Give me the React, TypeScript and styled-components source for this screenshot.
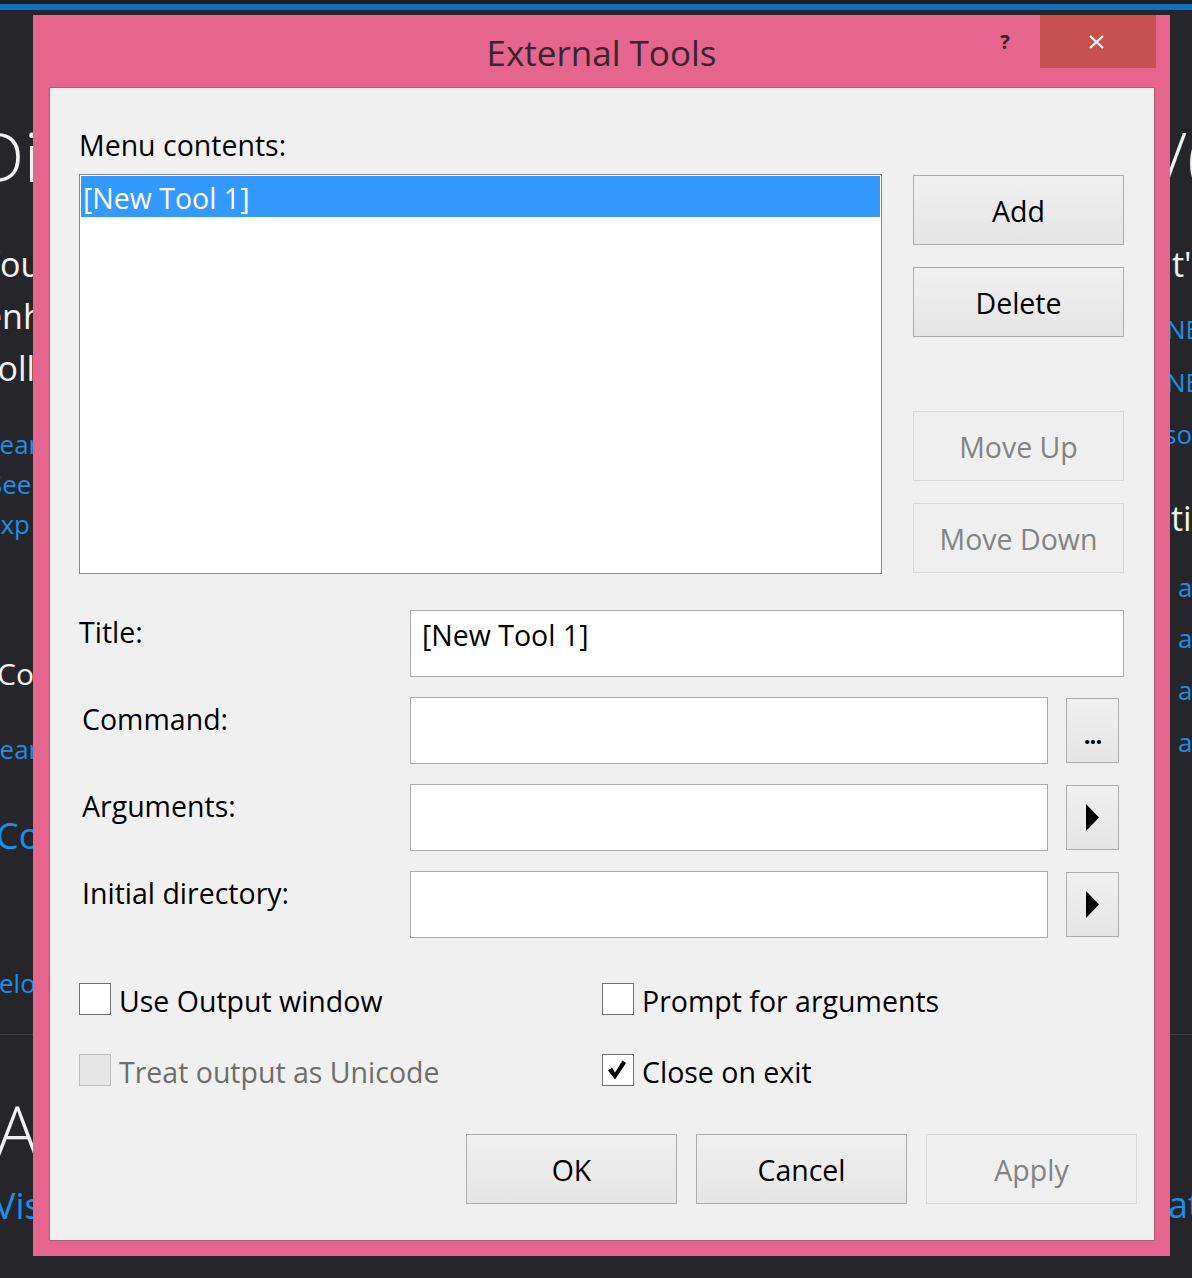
import React from 'react';
import styled, { createGlobalStyle } from 'styled-components';

const FONT = `"Open Sans", "Noto Sans", "DejaVu Sans", sans-serif`;

const Global = createGlobalStyle`
  html, body { margin: 0; padding: 0; background: #26262a; }
  body { font-family: ${FONT}; overflow: hidden; }
  * { box-sizing: border-box; }
`;

/* ---------- background start page ---------- */

const Page = styled.div`
  position: relative;
  width: 1192px;
  height: 1278px;
  overflow: hidden;
  background: #26262a;
  display: flex;
  flex-direction: column;
`;

const TopStrip = styled.div`
  height: 10px;
  background: #1f1f22;
  border-bottom: 6px solid #0e72c3;
  flex: none;
`;

const Section = styled.div<{ $height?: number }>`
  display: grid;
  grid-template-columns: 1170px 1fr;
  height: ${(p) => (p.$height ? `${p.$height}px` : 'auto')};
  flex: none;
`;

const Column = styled.div`
  display: flex;
  flex-direction: column;
  overflow: hidden;
  white-space: nowrap;
`;

const Fragment = styled.div<{
  $size: number;
  $gap: number;
  $indent?: number;
  $link?: boolean;
  $light?: boolean;
}>`
  font-family: ${FONT};
  font-size: ${(p) => p.$size}px;
  line-height: ${(p) => p.$size}px;
  height: ${(p) => p.$size}px;
  margin-top: ${(p) => p.$gap}px;
  margin-left: ${(p) => p.$indent ?? 0}px;
  color: ${(p) => (p.$link ? '#1b8fe8' : '#f1f1f1')};
  font-weight: ${(p) => (p.$light ? 300 : 400)};
`;

const Rule = styled.div`
  height: 1px;
  background: #3f3f46;
  flex: none;
`;

/* ---------- dialog window ---------- */

const Window = styled.div`
  position: absolute;
  left: 33px;
  top: 15px;
  width: 1137px;
  height: 1241px;
  background: #e5658f;
  display: flex;
  flex-direction: column;
  font-family: ${FONT};
`;

const TitleBar = styled.div`
  height: 72px;
  flex: none;
  display: grid;
  grid-template-columns: 1fr auto 1fr;
`;

const Title = styled.div`
  grid-column: 2;
  font-size: 35px;
  line-height: 75px;
  color: #38262f;
  white-space: nowrap;
`;

const Controls = styled.div`
  grid-column: 3;
  justify-self: end;
  align-self: start;
  margin-right: 14px;
  display: flex;
  gap: 8px;
  height: 53px;
`;

const HelpButton = styled.div`
  width: 54px;
  height: 53px;
  display: flex;
  align-items: center;
  justify-content: center;
  font-weight: 700;
  font-size: 20px;
  color: #2e2428;
`;

const CloseButton = styled.div`
  width: 116px;
  height: 53px;
  background: #c75050;
  display: flex;
  align-items: center;
  justify-content: center;
  padding-right: 3px;
`;

const Frame = styled.div`
  flex: 1;
  padding: 0 15px 15px 16px;
  display: flex;
`;

const Client = styled.div`
  flex: 1;
  background: #f0f0f0;
  border: 1px solid #a8607a;
  padding: 39px 0 0 29px;
  display: flex;
  flex-direction: column;
  font-size: 28.5px;
  color: #000;
`;

const Label = styled.div<{ $indent?: number }>`
  line-height: 36px;
  height: 36px;
  padding-left: ${(p) => p.$indent ?? 0}px;
  white-space: nowrap;
`;

const ListSection = styled.div`
  margin-top: 11px;
  width: 1045px;
  display: grid;
  grid-template-columns: 803px 211px;
  column-gap: 31px;
`;

const ListBox = styled.div`
  height: 400px;
  background: #fff;
  border: 1px solid #828790;
  padding: 1px;
`;

const ListItem = styled.div<{ $selected?: boolean }>`
  height: 41px;
  line-height: 41px;
  padding: 2px 0 0 2px;
  background: ${(p) => (p.$selected ? '#3399ff' : 'transparent')};
  color: ${(p) => (p.$selected ? '#fff' : '#000')};
`;

const ButtonColumn = styled.div`
  padding-top: 1px;
  display: flex;
  flex-direction: column;
  gap: 22px;
`;

const PushButton = styled.div<{ $disabled?: boolean; $spaced?: boolean }>`
  width: 211px;
  height: 70px;
  flex: none;
  margin-top: ${(p) => (p.$spaced ? 52 : 0)}px;
  display: flex;
  align-items: center;
  justify-content: center;
  padding-top: 2px;
  border: 1px solid ${(p) => (p.$disabled ? '#d9d9d9' : '#acacac')};
  background: ${(p) =>
    p.$disabled ? '#efefef' : 'linear-gradient(to bottom, #f0f0f0, #e5e5e5)'};
  color: ${(p) => (p.$disabled ? '#838383' : '#000')};
`;

const Fields = styled.div`
  margin-top: 36px;
  width: 1045px;
  display: flex;
  flex-direction: column;
  gap: 20px;
`;

const FieldRow = styled.div`
  display: grid;
  grid-template-columns: 331px 1fr;
`;

const FieldLabel = styled(Label)`
  margin-top: 4px;
`;

const FieldControls = styled.div<{ $withButton?: boolean }>`
  display: flex;
  gap: 18px;
  padding-right: ${(p) => (p.$withButton ? 5 : 0)}px;
`;

const TextBox = styled.div`
  flex: 1;
  height: 67px;
  background: #fff;
  border: 1px solid #ababab;
  padding: 6px 10px 0 11px;
  line-height: 36px;
  white-space: nowrap;
`;

const SmallButton = styled.div`
  width: 53px;
  height: 65px;
  align-self: center;
  border: 1px solid #acacac;
  background: linear-gradient(to bottom, #f0f0f0, #e5e5e5);
  display: flex;
  align-items: center;
  justify-content: center;
`;

const Ellipsis = styled.span`
  font-size: 24px;
  font-weight: 700;
  padding-top: 8px;
  letter-spacing: -1px;
`;

const Options = styled.div`
  margin-top: 45px;
  display: grid;
  grid-template-columns: 523px 1fr;
  grid-auto-rows: 32px;
  row-gap: 39px;
`;

const CheckItem = styled.div<{ $disabled?: boolean }>`
  display: flex;
  align-items: flex-start;
  height: 32px;
  gap: 8px;
  color: ${(p) => (p.$disabled ? '#6d6d6d' : '#000')};
`;

const Box = styled.div<{ $disabled?: boolean }>`
  width: 32px;
  height: 32px;
  flex: none;
  border: 1px solid ${(p) => (p.$disabled ? '#bcbcbc' : '#707070')};
  background: ${(p) => (p.$disabled ? '#e6e6e6' : '#fff')};
  display: flex;
  align-items: center;
  justify-content: center;
`;

const CheckText = styled.span`
  line-height: 32px;
  height: 32px;
  padding-top: 2px;
  white-space: nowrap;
`;

const ButtonRow = styled.div`
  margin-top: 48px;
  width: 1058px;
  display: flex;
  justify-content: flex-end;
  gap: 19px;
`;

/* ---------- icons ---------- */

const CloseIcon = () => (
  <svg width="15" height="14" viewBox="0 0 15 14">
    <path d="M1 1 L14 13 M14 1 L1 13" stroke="#fff" strokeWidth="2.2" fill="none" />
  </svg>
);

const Arrow = () => (
  <svg width="13" height="27" viewBox="0 0 13 27">
    <polygon points="0,0 13,13.5 0,27" fill="#000" />
  </svg>
);

const Check = () => (
  <svg width="30" height="30" viewBox="0 0 30 30">
    <polygon points="5,15.5 9,12.5 12,17.5 19.5,5.5 23,8 12,24.5" fill="#000" />
  </svg>
);

type CheckProps = { label: string; checked?: boolean; disabled?: boolean };

const CheckOption = ({ label, checked, disabled }: CheckProps) => (
  <CheckItem $disabled={disabled}>
    <Box $disabled={disabled}>{checked && <Check />}</Box>
    <CheckText>{label}</CheckText>
  </CheckItem>
);

type FieldProps = {
  label: string;
  indent?: number;
  value?: string;
  button?: 'browse' | 'arrow';
};

const Field = ({ label, indent, value, button }: FieldProps) => (
  <FieldRow>
    <FieldLabel $indent={indent}>{label}</FieldLabel>
    <FieldControls $withButton={!!button}>
      <TextBox>{value}</TextBox>
      {button && (
        <SmallButton>{button === 'browse' ? <Ellipsis>...</Ellipsis> : <Arrow />}</SmallButton>
      )}
    </FieldControls>
  </FieldRow>
);

export default function App() {
  return (
    <>
      <Global />
      <Page>
        <TopStrip />
        <Section $height={1024}>
          <Column>
            <Fragment $size={68} $gap={112} $indent={-24} $light>Di</Fragment>
            <Fragment $size={34} $gap={57} $indent={-19}>You</Fragment>
            <Fragment $size={34} $gap={18} $indent={-17}>enh</Fragment>
            <Fragment $size={34} $gap={18} $indent={-14}>foll</Fragment>
            <Fragment $size={26} $gap={46} $indent={-14} $link>Lear</Fragment>
            <Fragment $size={26} $gap={14} $indent={-12} $link>See</Fragment>
            <Fragment $size={26} $gap={14} $indent={-14} $link>Exp</Fragment>
            <Fragment $size={30} $gap={122} $indent={-3}>Con</Fragment>
            <Fragment $size={26} $gap={47} $indent={-14} $link>Lear</Fragment>
            <Fragment $size={36} $gap={56} $indent={-4} $link>Con</Fragment>
            <Fragment $size={26} $gap={116} $indent={-1} $link>elo</Fragment>
          </Column>
          <Column>
            <Fragment $size={68} $gap={112} $indent={-6} $light>/(</Fragment>
            <Fragment $size={34} $gap={57} $indent={2}>t'</Fragment>
            <Fragment $size={26} $gap={35} $indent={-4} $link>NE</Fragment>
            <Fragment $size={26} $gap={27} $indent={-4} $link>NE</Fragment>
            <Fragment $size={26} $gap={26} $indent={-6} $link>so</Fragment>
            <Fragment $size={34} $gap={54} $indent={1}>ti</Fragment>
            <Fragment $size={26} $gap={39} $indent={8} $link>a</Fragment>
            <Fragment $size={26} $gap={25} $indent={8} $link>a</Fragment>
            <Fragment $size={26} $gap={26} $indent={8} $link>a</Fragment>
            <Fragment $size={26} $gap={26} $indent={8} $link>a</Fragment>
          </Column>
        </Section>
        <Rule />
        <Section>
          <Column>
            <Fragment $size={70} $gap={60} $indent={-4} $light>An</Fragment>
            <Fragment $size={36} $gap={23} $indent={-6} $link>Visual</Fragment>
          </Column>
          <Column>
            <Fragment $size={36} $gap={152} $indent={-2} $link>at</Fragment>
          </Column>
        </Section>

        <Window>
          <TitleBar>
            <Title>External Tools</Title>
            <Controls>
              <HelpButton>?</HelpButton>
              <CloseButton>
                <CloseIcon />
              </CloseButton>
            </Controls>
          </TitleBar>
          <Frame>
            <Client>
              <Label>Menu contents:</Label>
              <ListSection>
                <ListBox>
                  <ListItem $selected>[New Tool 1]</ListItem>
                </ListBox>
                <ButtonColumn>
                  <PushButton>Add</PushButton>
                  <PushButton>Delete</PushButton>
                  <PushButton $disabled $spaced>Move Up</PushButton>
                  <PushButton $disabled>Move Down</PushButton>
                </ButtonColumn>
              </ListSection>

              <Fields>
                <Field label="Title:" value="[New Tool 1]" />
                <Field label="Command:" indent={3} button="browse" />
                <Field label="Arguments:" indent={3} button="arrow" />
                <Field label="Initial directory:" indent={3} button="arrow" />
              </Fields>

              <Options>
                <CheckOption label="Use Output window" />
                <CheckOption label="Prompt for arguments" />
                <CheckOption label="Treat output as Unicode" disabled />
                <CheckOption label="Close on exit" checked />
              </Options>

              <ButtonRow>
                <PushButton>OK</PushButton>
                <PushButton>Cancel</PushButton>
                <PushButton $disabled>Apply</PushButton>
              </ButtonRow>
            </Client>
          </Frame>
        </Window>
      </Page>
    </>
  );
}
